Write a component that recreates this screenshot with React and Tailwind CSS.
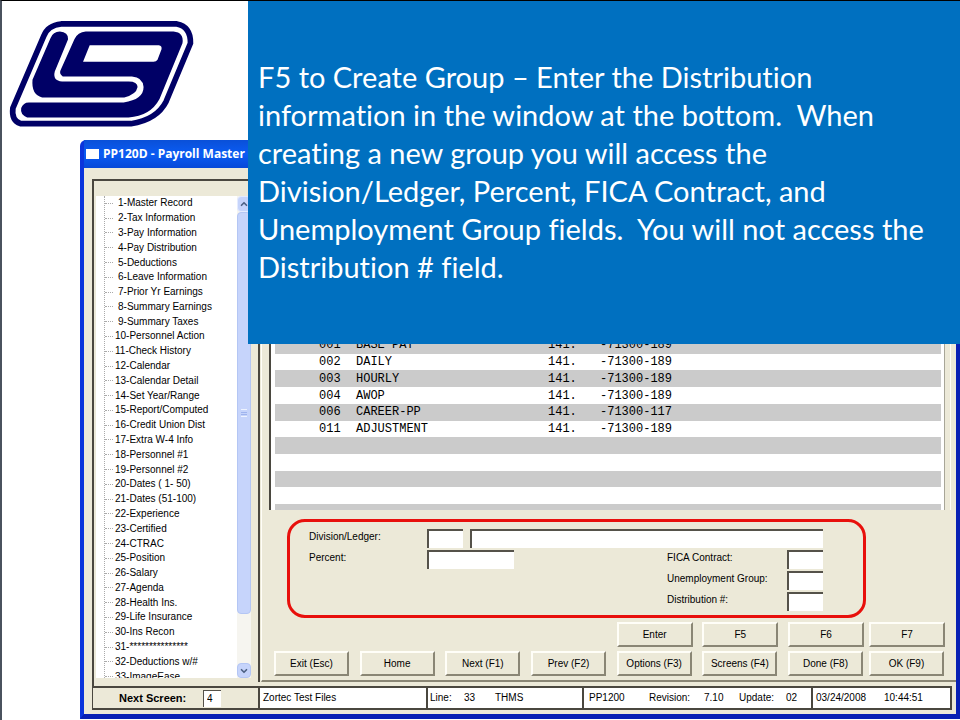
import React from 'react';
import { ChevronDown, ChevronUp } from 'lucide-react';

const menuItems = [
  '1-Master Record',
  '2-Tax Information',
  '3-Pay Information',
  '4-Pay Distribution',
  '5-Deductions',
  '6-Leave Information',
  '7-Prior Yr Earnings',
  '8-Summary Earnings',
  '9-Summary Taxes',
  '10-Personnel Action',
  '11-Check History',
  '12-Calendar',
  '13-Calendar Detail',
  '14-Set Year/Range',
  '15-Report/Computed',
  '16-Credit Union Dist',
  '17-Extra W-4 Info',
  '18-Personnel #1',
  '19-Personnel #2',
  '20-Dates ( 1- 50)',
  '21-Dates (51-100)',
  '22-Experience',
  '23-Certified',
  '24-CTRAC',
  '25-Position',
  '26-Salary',
  '27-Agenda',
  '28-Health Ins.',
  '29-Life Insurance',
  '30-Ins Recon',
  '31-***************',
  '32-Deductions w/#',
  '33-ImageEase',
];

const rows = [
  ['001', 'BASE PAY', '141.', '-71300-189'],
  ['002', 'DAILY', '141.', '-71300-189'],
  ['003', 'HOURLY', '141.', '-71300-189'],
  ['004', 'AWOP', '141.', '-71300-189'],
  ['006', 'CAREER-PP', '141.', '-71300-117'],
  ['011', 'ADJUSTMENT', '141.', '-71300-189'],
  ['', '', '', ''],
  ['', '', '', ''],
  ['', '', '', ''],
  ['', '', '', ''],
  ['', '', '', ''],
];

const topKeys = ['Enter', 'F5', 'F6', 'F7'];
const bottomKeys = ['Exit (Esc)', 'Home', 'Next (F1)', 'Prev (F2)', 'Options (F3)', 'Screens (F4)', 'Done (F8)', 'OK (F9)'];

function Logo() {
  return (
    <svg viewBox="0 0 600 400" className="w-[200px] h-[133px]" role="img" aria-label="LG logo">
      <path
        d="M177 69 L525 69 Q567 77 566 127 L493 302 Q465 357 387 369 L55 369 Q27 359 32 322 L125 105 Q137 73 177 69 Z"
        fill="none"
        stroke="#000066"
        strokeWidth="17"
      />
      <path
        d="M145 112 Q153 92 173 92 Q199 94 198 115 L158 212 Q151 240 180 242 L380 242 Q407 242 407 259 Q403 282 367 290 L120 290 Q87 282 91 237 Z"
        fill="#000066"
      />
      <path
        fillRule="evenodd"
        d="M217 115 Q227 94 251 92 L515 92 Q547 95 542 127 L473 295 Q445 347 380 350 L75 350 Q53 342 57 322 Q63 305 80 305 L365 305 Q425 297 425 259 Q423 229 390 227 L182 227 Q171 219 175 209 Z M263 133 L471 133 Q481 135 479 145 L467 177 Q463 183 455 183 L243 183 Z"
        fill="#000066"
      />
    </svg>
  );
}

function KeyButton({ label, wide }) {
  return (
    <button
      className={`${wide ? 'w-[76px]' : 'w-[75px]'} h-[25px] bg-[#ece9d8] border-2 border-t-[#fffef8] border-l-[#fffef8] border-r-[#8a8675] border-b-[#8a8675] text-center whitespace-nowrap`}
    >
      {label}
    </button>
  );
}

function Field({ id, className }) {
  return <input id={id} className={`${className} h-[19px] px-1 bg-white border-t-2 border-l-2 border-[#55524a] outline-none`} />;
}

function Tree() {
  return (
    <div className="flex h-[482px] bg-white overflow-hidden">
      <ul className="flex-1 ml-2 h-[488px] grid auto-rows-fr border-l border-dotted border-[#aaa]">
        {menuItems.map((item, i) => (
          <li key={item} className="flex items-center min-h-0 leading-[14px] whitespace-nowrap">
            <span className={`w-2 border-t border-dotted border-[#aaa] ${i < 9 ? 'mr-[5px]' : 'mr-[2px]'}`}></span>
            {item}
          </li>
        ))}
      </ul>
      <div className="w-[14px] flex flex-col bg-[#f6f5f0]">
        <button aria-label="Scroll up" className="h-4 flex items-center justify-center bg-[#c6d4fb] border border-[#e4ebff] rounded-sm">
          <ChevronUp size={10} strokeWidth={4} color="#4d6185" />
        </button>
        <div className="h-[402px] flex items-center justify-center bg-[#c6d4fb] border border-[#b4c6f4] rounded-sm">
          <div className="w-[6px] h-2 border-y border-[#eef3ff] flex flex-col justify-center">
            <div className="h-[3px] border-y border-[#9fb4ee]"></div>
          </div>
        </div>
        <div className="flex-1"></div>
        <button aria-label="Scroll down" className="h-[15px] flex items-center justify-center bg-[#c6d4fb] border border-[#b4c6f4] rounded-sm">
          <ChevronDown size={10} strokeWidth={4} color="#4d6185" />
        </button>
      </div>
    </div>
  );
}

function DistributionTable() {
  return (
    <div className="flex-1 min-h-0 basis-0 overflow-hidden ml-[7px] mr-[5px] border-r border-[#fffef8]">
      <div className="h-full mr-[5px] overflow-hidden bg-white border-l-2 border-r border-l-[#4a473f] border-r-[#a8a698] pt-[156px] pl-1 pr-[3px]">
        <table className="w-full h-[184px] table-fixed border-collapse font-['Liberation_Mono',monospace] text-[12px] leading-[14px]">
          <colgroup>
            <col className="w-[81px]" />
            <col className="w-[192px]" />
            <col className="w-[52px]" />
            <col />
          </colgroup>
          <tbody>
            {rows.map((row, i) => (
              <tr key={i} className="h-4 odd:bg-[#cbcbcb] even:bg-white">
                <td className="p-0 pl-11">{row[0]}</td>
                <td className="p-0">{row[1]}</td>
                <td className="p-0">{row[2]}</td>
                <td className="p-0">{row[3]}</td>
              </tr>
            ))}
          </tbody>
        </table>
      </div>
    </div>
  );
}

function DistributionForm() {
  return (
    <form className="ml-[25px] mr-[90px] mt-[9px] h-[99px] pl-[19px] pr-10 pt-[7px] border-3 border-[#e8100c] rounded-[18px]">
      <div className="flex">
        <label htmlFor="ledger" className="w-[118px]">Division/Ledger:</label>
        <Field id="ledger" className="w-[36px]" />
        <input aria-label="Ledger name" className="flex-1 min-w-0 ml-[7px] h-[19px] px-1 bg-white border-t-2 border-l-2 border-[#55524a] outline-none" />
      </div>
      <div className="flex justify-between mt-[2px]">
        <div className="flex">
          <label htmlFor="percent" className="w-[118px]">Percent:</label>
          <Field id="percent" className="w-[87px]" />
        </div>
        <div className="flex flex-col gap-[2px]">
          <div className="flex">
            <label htmlFor="fica" className="w-[120px]">FICA Contract:</label>
            <Field id="fica" className="w-[36px]" />
          </div>
          <div className="flex">
            <label htmlFor="unemployment" className="w-[120px]">Unemployment Group:</label>
            <Field id="unemployment" className="w-[36px]" />
          </div>
          <div className="flex">
            <label htmlFor="distribution" className="w-[120px]">Distribution #:</label>
            <Field id="distribution" className="w-[36px]" />
          </div>
        </div>
      </div>
    </form>
  );
}

function StatusBar() {
  return (
    <div className="flex h-6 mr-1 border-y-2 border-r-2 border-[#4a473f] leading-5 whitespace-pre">
      <div className="w-[166px] flex items-center pl-[26px] border-l border-[#4a473f]">
        <label htmlFor="next" className="w-[84px] text-[11px] font-bold">Next Screen:</label>
        <input id="next" defaultValue="4" className="w-[18px] h-[17px] pl-[3px] bg-white border-t border-l border-[#55524a] outline-none" />
      </div>
      <div className="w-[168px] pl-[3px] bg-white border-l-2 border-[#4a473f]">Zortec Test Files</div>
      <div className="w-[156px] flex pl-[2px] bg-white border-l-2 border-[#4a473f]">
        <span className="w-[34px]">Line:</span>
        <span className="w-[31px]">33</span>
        <span>THMS</span>
      </div>
      <div className="w-[229px] flex pl-[5px] bg-white border-l-2 border-[#4a473f]">
        <span className="w-[60px]">PP1200</span>
        <span className="w-[55px]">Revision:</span>
        <span className="w-[35px]">7.10</span>
        <span className="w-[47px]">Update:</span>
        <span>02</span>
      </div>
      <div className="flex-1 flex pl-[3px] bg-white border-l-2 border-[#4a473f]">
        <span className="w-[68px]">03/24/2008</span>
        <span>10:44:51</span>
      </div>
    </div>
  );
}

export default function App() {
  return (
    <div className="relative w-full min-h-screen bg-white border-l-2 border-t border-l-[#4a525e] border-t-black overflow-hidden font-['Liberation_Sans',Arial,sans-serif] text-[10px] leading-4 text-black">
      <header className="h-[139px]">
        <Logo />
      </header>

      <main className="ml-[78px] bg-[#ece9d8] border-x-4 border-b-[5px] border-l-[#0a34dc] border-r-[#0820b4] border-b-[#0820b4] rounded-tl-md">
        <div className="h-7 flex items-center gap-1 pl-[2px] bg-linear-to-b from-[#0a50d8] via-[#0a5cf4] to-[#0648d8] text-white">
          <div className="w-[13px] h-[10px] bg-white"></div>
          <h1 className="font-['Open_Sans',sans-serif] text-[12px] font-bold whitespace-nowrap">PP120D - Payroll Master M</h1>
        </div>

        <div className="pt-[11px] pl-2 pb-1">
          <div className="flex border-t-2 border-l-2 border-[#4a473f]">
            <nav className="w-[164px] shrink-0 pt-[15px] pl-[2px] pr-[7px] pb-[8px]" aria-label="Screens">
              <Tree />
            </nav>
            <section className="flex-1 min-w-0 flex flex-col border-l-2 border-[#4a473f] mb-1">
              <div className="flex-1 flex flex-col ml-[1px] border-l border-b-2 border-l-[#fffef8] border-b-[#8a8675]">
                <DistributionTable />
                <DistributionForm />
                <div className="grid grid-cols-[repeat(6,1fr)_81px_76px] gap-y-1 ml-3 mr-[11px] mt-[4px] mb-[4px]">
                  <div className="col-span-4"></div>
                  {topKeys.map((label) => (
                    <KeyButton key={label} label={label} wide />
                  ))}
                  {bottomKeys.map((label) => (
                    <KeyButton key={label} label={label} />
                  ))}
                </div>
              </div>
            </section>
          </div>
          <StatusBar />
        </div>
      </main>

      {/* Instruction callout lies over the window */}
      <aside className="absolute top-0 left-[246px] right-0 h-[343px] pt-[57px] pl-[10px] bg-[#0070c0] text-white">
        <p className="font-[Lato,sans-serif] text-[29px] leading-[38px] whitespace-pre [font-variant-ligatures:none]">
          F5 to Create Group – Enter the Distribution{'\n'}
          information in the window at the bottom.  When{'\n'}
          creating a new group you will access the{'\n'}
          Division/Ledger, Percent, FICA Contract, and{'\n'}
          Unemployment Group fields.  You will not access the{'\n'}
          Distribution # field.
        </p>
      </aside>
    </div>
  );
}
